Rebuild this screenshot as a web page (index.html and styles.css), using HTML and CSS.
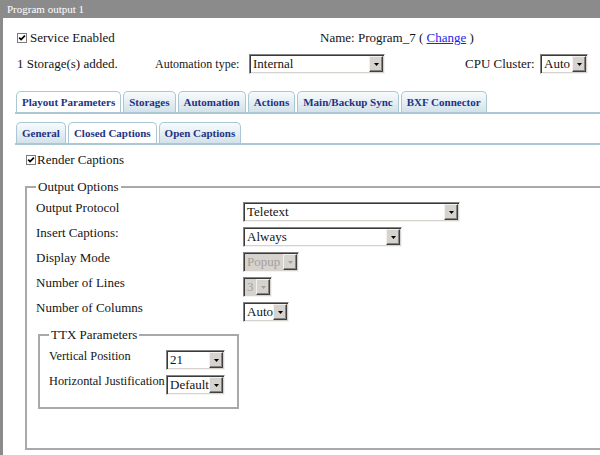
FILE: index.html
```html
<!DOCTYPE html>
<html>
<head>
<meta charset="utf-8">
<link rel="stylesheet" href="styles.css">
</head>
<body>
<div class="titlebar">Program output 1</div>
<div class="window">
  <div class="top">
    <div class="row1">
      <label class="service">
        <svg class="chk" width="10" height="10" viewBox="0 0 10 10"><rect x="0.5" y="0.5" width="9" height="9" fill="#fff" stroke="#7a7a7a"/><path d="M2.2 4.6l1.9 2 3.8-3.9" fill="none" stroke="#000" stroke-width="1.7"/></svg>
        <span>Service Enabled</span>
      </label>
      <span class="name">Name: Program_7 ( <a href="#" class="link">Change</a> )</span>
    </div>
    <div class="row2">
      <span class="storage">1 Storage(s) added.</span>
      <span class="lbl-auto">Automation type:</span>
      <div class="sel sel-automation"><span class="sel-val">Internal</span><span class="sel-btn"><svg width="5" height="3" viewBox="0 0 5 3"><path d="M0 0h5L2.5 3z"/></svg></span></div>
      <span class="lbl-cpu">CPU Cluster:</span>
      <div class="sel sel-cpu"><span class="sel-val">Auto</span><span class="sel-btn"><svg width="5" height="3" viewBox="0 0 5 3"><path d="M0 0h5L2.5 3z"/></svg></span></div>
    </div>
  </div>

  <div class="tabs tabs-main">
    <span class="tab active">Playout Parameters</span>
    <span class="tab">Storages</span>
    <span class="tab">Automation</span>
    <span class="tab">Actions</span>
    <span class="tab">Main/Backup Sync</span>
    <span class="tab">BXF Connector</span>
  </div>
  <div class="tabs tabs-sub">
    <span class="tab">General</span>
    <span class="tab active">Closed Captions</span>
    <span class="tab">Open Captions</span>
  </div>

  <label class="render">
    <svg class="chk" width="10" height="10" viewBox="0 0 10 10"><rect x="0.5" y="0.5" width="9" height="9" fill="#fff" stroke="#7a7a7a"/><path d="M2.2 4.6l1.9 2 3.8-3.9" fill="none" stroke="#000" stroke-width="1.7"/></svg>
    <span>Render Captions</span>
  </label>

  <fieldset class="opts">
    <legend>Output Options</legend>
    <div class="opt-grid">
      <span class="lbl">Output Protocol</span>
      <div class="sel sel-protocol"><span class="sel-val">Teletext</span><span class="sel-btn"><svg width="5" height="3" viewBox="0 0 5 3"><path d="M0 0h5L2.5 3z"/></svg></span></div>

      <span class="lbl">Insert Captions:</span>
      <div class="sel sel-insert"><span class="sel-val">Always</span><span class="sel-btn"><svg width="5" height="3" viewBox="0 0 5 3"><path d="M0 0h5L2.5 3z"/></svg></span></div>

      <span class="lbl">Display Mode</span>
      <div class="sel sel-display disabled"><span class="sel-val">Popup</span><span class="sel-btn"><svg width="5" height="3" viewBox="0 0 5 3"><path d="M0 0h5L2.5 3z"/></svg></span></div>

      <span class="lbl">Number of Lines</span>
      <div class="sel sel-lines disabled"><span class="sel-val">3</span><span class="sel-btn"><svg width="5" height="3" viewBox="0 0 5 3"><path d="M0 0h5L2.5 3z"/></svg></span></div>

      <span class="lbl">Number of Columns</span>
      <div class="sel sel-columns"><span class="sel-val">Auto</span><span class="sel-btn"><svg width="5" height="3" viewBox="0 0 5 3"><path d="M0 0h5L2.5 3z"/></svg></span></div>

      <fieldset class="ttx">
        <legend>TTX Parameters</legend>
        <div class="ttx-grid">
          <span class="lbl ttx-lbl">Vertical Position</span>
          <div class="sel sel-ttx"><span class="sel-val">21</span><span class="sel-btn"><svg width="5" height="3" viewBox="0 0 5 3"><path d="M0 0h5L2.5 3z"/></svg></span></div>
          <span class="lbl ttx-lbl">Horizontal Justification</span>
          <div class="sel sel-ttx"><span class="sel-val">Default</span><span class="sel-btn"><svg width="5" height="3" viewBox="0 0 5 3"><path d="M0 0h5L2.5 3z"/></svg></span></div>
        </div>
      </fieldset>
    </div>
  </fieldset>
</div>
</body>
</html>
```

FILE: styles.css
```css
html, body {
  margin: 0;
  padding: 0;
}
body {
  width: 600px;
  height: 455px;
  overflow: hidden;
  background: #fff;
  font-family: "Liberation Serif", "Times New Roman", serif;
  font-size: 13px;
  color: #141414;
}
.titlebar {
  height: 18px;
  line-height: 18px;
  background: #8b8b8b;
  color: #fff;
  font-size: 11px;
  padding-left: 7px;
}
.window {
  border-left: 3px solid #8b8b8b;
  height: 437px;
  box-sizing: border-box;
  overflow: hidden;
}
.top {
  padding: 12px 0 0 14px;
}
.row1 {
  display: flex;
  height: 16px;
  line-height: 16px;
}
.service {
  width: 303px;
  display: flex;
  align-items: center;
  gap: 3px;
}
.chk {
  display: block;
  flex: none;
}
.link {
  color: #2424e6;
  text-decoration: underline;
}
.row2 {
  display: flex;
  align-items: center;
  height: 20px;
  margin-top: 8px;
}
.storage {
  width: 138px;
}
.lbl-auto {
  width: 94px;
  font-size: 12px;
}
.lbl-cpu {
  width: 75px;
  margin-left: 80px;
}
.sel-automation { width: 136px; }
.sel-cpu { width: 48px; }

/* classic select */
.sel {
  box-sizing: border-box;
  height: 20px;
  display: flex;
  align-items: stretch;
  background: #fff;
  border-top: 1px solid #848484;
  border-left: 1px solid #848484;
  border-right: 1px solid #f4f4f4;
  border-bottom: 1px solid #f4f4f4;
  box-shadow: inset 1px 1px 0 #3a3a3a, inset -1px -1px 0 #d6d3ce;
  padding: 1px;
}
.sel-val {
  flex: 1;
  line-height: 16px;
  padding-left: 2px;
  white-space: nowrap;
  overflow: hidden;
  font-size: 13px;
}
.sel-btn {
  flex: none;
  width: 14px;
  box-sizing: border-box;
  background: #d6d3ce;
  border-top: 1px solid #f2f1ee;
  border-left: 1px solid #f2f1ee;
  border-right: 1px solid #404040;
  border-bottom: 1px solid #404040;
  box-shadow: inset -1px -1px 0 #848484;
  display: flex;
  align-items: center;
  justify-content: center;
}
.sel-btn svg {
  display: block;
  fill: #000;
}
.sel.disabled {
  background: #d6d3ce;
}
.sel.disabled .sel-val {
  color: #a4a09a;
}
.sel.disabled .sel-btn svg {
  fill: #a4a09a;
}

/* tabs */
.tabs {
  display: flex;
  align-items: flex-end;
  gap: 2px;
  margin-left: 12px;
  padding-left: 1px;
  height: 21px;
  border-bottom: 2px solid #a9c8d4;
}
.tabs-main { margin-top: 17px; }
.tabs-sub { margin-top: 8px; }
.tab {
  box-sizing: border-box;
  height: 21px;
  padding: 0 5px;
  border: 1px solid #a9c8d4;
  border-bottom: none;
  border-radius: 5px 5px 0 0;
  background: linear-gradient(#f8fbfc, #d3e2ea);
  font-size: 11px;
  font-weight: bold;
  color: #1d3384;
  line-height: 20px;
  white-space: nowrap;
}
.tab.active {
  background: #fff;
}

.render {
  display: flex;
  align-items: center;
  gap: 1px;
  margin: 7px 0 0 23px;
  height: 16px;
  line-height: 16px;
}

/* fieldsets */
fieldset {
  margin: 0;
  min-width: 0;
  border: 2px solid #a9a9a9;
  box-sizing: border-box;
}
legend {
  padding: 0 2px;
  font-size: 13px;
  line-height: 15px;
}
.opts {
  margin: 11px 0 0 22px;
  width: 640px;
  padding: 0 0 39px 9px;
}
.opt-grid {
  display: grid;
  grid-template-columns: 207px auto;
  row-gap: 5px;
  justify-items: start;
  padding-top: 8px;
}
.lbl {
  line-height: 16px;
  margin-top: -2px;
  white-space: nowrap;
}
.sel-protocol { width: 217px; }
.sel-insert { width: 159px; }
.sel-display { width: 56px; }
.sel-lines { width: 29px; }
.sel-columns { width: 46px; }

.ttx {
  grid-column: 1 / -1;
  margin-left: 2px;
  width: 201px;
  padding: 0 0 12px 9px;
}
.ttx-grid {
  display: grid;
  grid-template-columns: 117px auto;
  row-gap: 5px;
  justify-items: start;
  padding-top: 8px;
}
.ttx-lbl {
  font-size: 12.3px;
}
.sel-ttx { width: 59px; }
```
